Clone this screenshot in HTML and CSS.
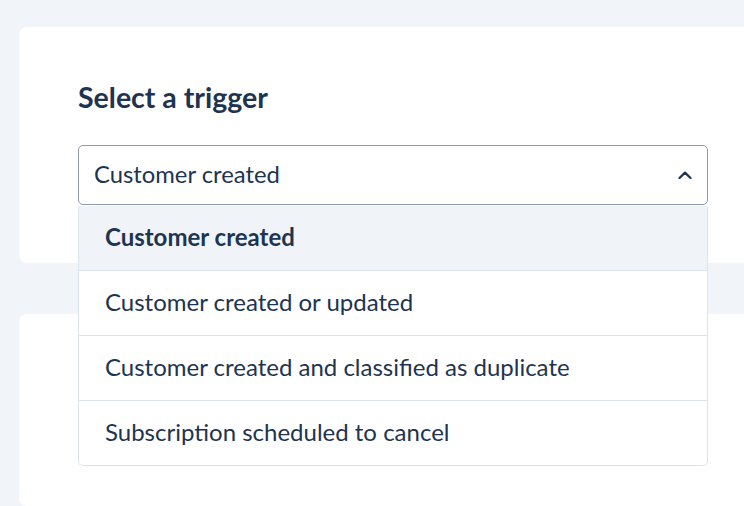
FILE: index.html
```html
<!DOCTYPE html>
<html lang="en">
<head>
<meta charset="utf-8">
<title>Select a trigger</title>
<link rel="stylesheet" href="styles.css">
</head>
<body>
<main class="page">
  <section class="card card-top">
    <h2 class="title">Select a trigger</h2>
    <div class="select">
      <div class="select-box">
        <span class="select-value">Customer created</span>
        <svg class="chevron" width="14" height="8" viewBox="0 0 14 8" aria-hidden="true">
          <path d="M1.5 7 L7 1.6 L12.5 7" fill="none" stroke="#1e3450" stroke-width="2.2" stroke-linecap="round" stroke-linejoin="round"/>
        </svg>
      </div>
      <ul class="menu">
        <li class="option option-active">Customer created</li>
        <li class="option">Customer created or updated</li>
        <li class="option">Customer created and classified as duplicate</li>
        <li class="option">Subscription scheduled to cancel</li>
      </ul>
    </div>
  </section>
  <section class="card card-bottom"></section>
</main>
</body>
</html>
```

FILE: styles.css
```css
html, body {
  margin: 0;
  padding: 0;
  height: 100%;
  overflow: hidden;
  background: #f1f4f9;
}

body {
  font-family: "Lato", "Open Sans", sans-serif;
  color: #1e3450;
}

.page {
  display: flex;
  flex-direction: column;
  gap: 51px;
  padding: 27px 0 0 19px;
}

.card {
  background: #ffffff;
  border-radius: 8px 0 0 8px;
}

.card-top {
  height: 236px;
  padding: 0 36px 0 59px;
  box-sizing: border-box;
  position: relative;
  z-index: 2;
}

.card-bottom {
  height: 192px;
}

.title {
  margin: 0;
  padding-top: 52px;
  font-size: 28.5px;
  font-weight: 700;
  line-height: 36px;
  letter-spacing: 0;
}

.select {
  position: relative;
  margin-top: 30px;
  width: 630px;
}

.select-box {
  display: flex;
  align-items: center;
  justify-content: space-between;
  height: 60px;
  box-sizing: border-box;
  border: 1px solid #8b9bb0;
  border-radius: 5px;
  padding: 0 15px 0 15px;
  background: #fff;
}

.select-value {
  font-size: 23.8px;
  padding-bottom: 3px;
}

.chevron {
  display: block;
}

.menu {
  position: absolute;
  top: 61px;
  left: 0;
  right: 0;
  margin: 0;
  padding: 0;
  list-style: none;
  background: #fff;
  border: 1px solid #dde3eb;
  border-top: none;
  border-radius: 0 0 5px 5px;
  overflow: hidden;
}

.option {
  height: 64px;
  box-sizing: border-box;
  display: flex;
  align-items: center;
  padding: 0 0 4px 26px;
  font-size: 24px;
  border-top: 1px solid #dde3eb;
}

.option:first-child {
  border-top: none;
  height: 64px;
}

.option + .option {
  height: 65px;
}

.option-active {
  background: #f0f4f9;
  font-weight: 700;
}
```
